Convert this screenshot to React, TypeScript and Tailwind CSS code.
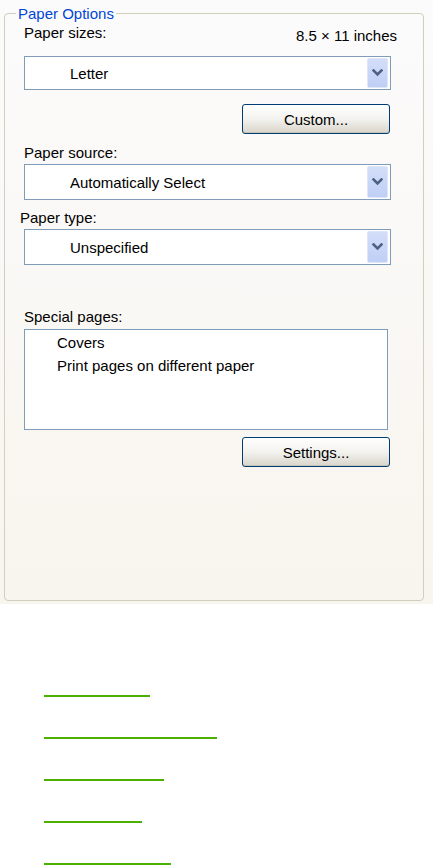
import React from 'react';

const font = { fontFamily: '"Liberation Sans", Arial, sans-serif' };

function Chevron() {
  return (
    <svg width="11" height="8" viewBox="0 0 11 8">
      <path d="M1.5 1.5 L5.5 5.5 L9.5 1.5" fill="none" stroke="#4d6185" strokeWidth="2.6" strokeLinecap="square" />
    </svg>
  );
}

function Select({ value, h }: { value: string; h: string }) {
  return (
    <div className={`ml-[8px] flex w-[367px] items-center justify-between border border-[#7f9db9] bg-white ${h}`}>
      <span className="pl-[45px] text-[15px] leading-[17px] text-black">{value}</span>
      <div className="mr-[2px] flex h-[calc(100%-2px)] w-[21px] items-center justify-center rounded-[2px] border border-[#dfe6fa] bg-gradient-to-b from-[#d3def9] to-[#bfcff5]">
        <Chevron />
      </div>
    </div>
  );
}

function XpButton({ label }: { label: string }) {
  return (
    <button className="ml-[226px] flex h-[30px] w-[148px] items-center justify-center rounded-[3px] border border-[#003c74] bg-gradient-to-b from-[#ffffff] via-[#f3f2ee] to-[#d9d5cb] text-[15px] leading-[17px] text-black shadow-[inset_0_-1px_0_#c9c4b5]">
      {label}
    </button>
  );
}

export default function App() {
  const links = ['w-[106px]', 'w-[173px]', 'w-[120px]', 'w-[98px]', 'w-[127px]'];

  return (
    <div className="min-h-[865px] w-[433px] bg-white" style={font}>
      {/* Paper options panel */}
      <div className="h-[604px] w-[433px] bg-gradient-to-b from-[#fcfbfc] to-[#f8f5ee] pt-[5px]">
        <fieldset className="ml-[4px] h-[596px] w-[420px] rounded-[4px] border border-[#d0d0bf] pl-[11px] pt-[2px]">
          <legend className="px-[2px] text-[15px] leading-[17px] text-[#0046d5]">Paper Options</legend>

          <div className="ml-[8px] flex h-[17px] w-[373px] items-start justify-between text-[15px] leading-[17px] text-black">
            <span>Paper sizes:</span>
            <span className="mt-[3px]">8.5 × 11 inches</span>
          </div>

          <div className="mt-[15px]">
            <Select value="Letter" h="h-[34px]" />
          </div>

          <div className="mt-[14px]">
            <XpButton label="Custom..." />
          </div>

          <div className="ml-[8px] mt-[10px] text-[15px] leading-[17px] text-black">Paper source:</div>
          <div className="mt-[3px]">
            <Select value="Automatically Select" h="h-[36px]" />
          </div>

          <div className="ml-[4px] mt-[9px] text-[15px] leading-[17px] text-black">Paper type:</div>
          <div className="mt-[3px]">
            <Select value="Unspecified" h="h-[36px]" />
          </div>

          <div className="ml-[8px] mt-[43px] text-[15px] leading-[17px] text-black">Special pages:</div>
          <div className="ml-[8px] mt-[4px] h-[101px] w-[364px] border border-[#7f9db9] bg-white pl-[32px] pt-[1px] text-[15px] leading-[23px] text-black">
            <div>Covers</div>
            <div>Print pages on different paper</div>
          </div>

          <div className="mt-[7px]">
            <XpButton label="Settings..." />
          </div>
        </fieldset>
      </div>

      {/* Link underlines */}
      <div className="flex flex-col gap-[40px] pl-[44px] pt-[91px]">
        {links.map((w, i) => (
          <div key={i} className={`h-[2px] bg-[#4cb000] ${w}`} />
        ))}
      </div>
    </div>
  );
}
